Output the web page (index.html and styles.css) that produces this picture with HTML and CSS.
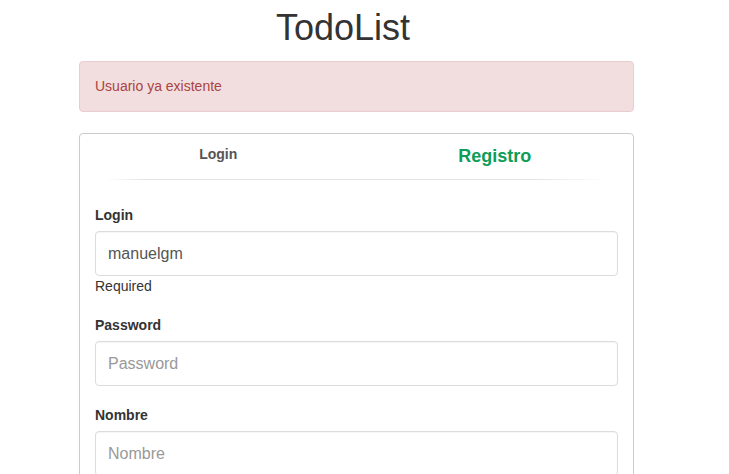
FILE: index.html
```html
<!DOCTYPE html>
<html lang="es">
<head>
<meta charset="utf-8">
<title>TodoList</title>
<link rel="stylesheet" href="styles.css">
</head>
<body>
<div class="page">
  <h1 class="title">TodoList</h1>
  <div class="alert">Usuario ya existente</div>
  <div class="panel">
    <div class="tabs">
      <div class="tab tab-login">Login</div>
      <div class="tab tab-active">Registro</div>
    </div>
    <div class="separator"></div>
    <form class="form">
      <div class="group">
        <label class="label">Login</label>
        <input class="input" type="text" value="manuelgm">
        <div class="help">Required</div>
      </div>
      <div class="group">
        <label class="label">Password</label>
        <input class="input" type="password" placeholder="Password">
      </div>
      <div class="group">
        <label class="label">Nombre</label>
        <input class="input" type="text" placeholder="Nombre">
      </div>
    </form>
  </div>
</div>
</body>
</html>
```

FILE: styles.css
```css
* { box-sizing: border-box; }
html, body { margin: 0; padding: 0; background: #fff; }
body {
  font-family: "Liberation Sans", Arial, Helvetica, sans-serif;
  font-size: 14px;
  line-height: 20px;
  color: #333;
}
.page {
  width: 555px;
  margin-left: 79px;
}
.title {
  margin: 8px 0 13px;
  padding-right: 27px;
  font-size: 36px;
  line-height: 40px;
  font-weight: 400;
  text-align: center;
  color: #333;
}
.alert {
  padding: 14px 15px 15px;
  margin-bottom: 21px;
  background: #f2dede;
  border: 1px solid #ebccd1;
  border-radius: 4px;
  color: #a94442;
  line-height: 20px;
}
.panel {
  border: 1px solid #ccc;
  border-radius: 4px;
  background: #fff;
  box-shadow: 0 1px 1px rgba(0,0,0,.05);
}
.tabs {
  display: flex;
  align-items: flex-start;
  padding-top: 10px;
}
.tab {
  flex: 1;
  text-align: center;
  font-weight: 700;
  line-height: 20px;
}
.tab-login {
  font-size: 14px;
  color: #555;
}
.tab-active {
  font-size: 18px;
  color: #0f9d58;
  margin-top: 2px;
}
.separator {
  height: 1px;
  margin: 13px 25px 0;
  background: linear-gradient(to right, rgba(220,220,220,0), #e3e3e3 8%, #e3e3e3 85%, rgba(220,220,220,0));
}
.form {
  padding: 25px 15px 15px;
}
.group {
  margin-bottom: 19px;
}
.label {
  display: block;
  font-weight: 700;
  margin-bottom: 6px;
  color: #333;
}
.input {
  display: block;
  width: 100%;
  height: 45px;
  padding: 0 12px;
  border: 1px solid #dcdcdc;
  border-radius: 4px;
  font-family: "Liberation Sans", Arial, Helvetica, sans-serif;
  font-size: 16px;
  color: #555;
  background: #fff;
  box-shadow: inset 0 1px 1px rgba(0,0,0,.04);
  outline: none;
}
.input::placeholder { color: #999; }
.help {
  color: #333;
  line-height: 20px;
}
```
